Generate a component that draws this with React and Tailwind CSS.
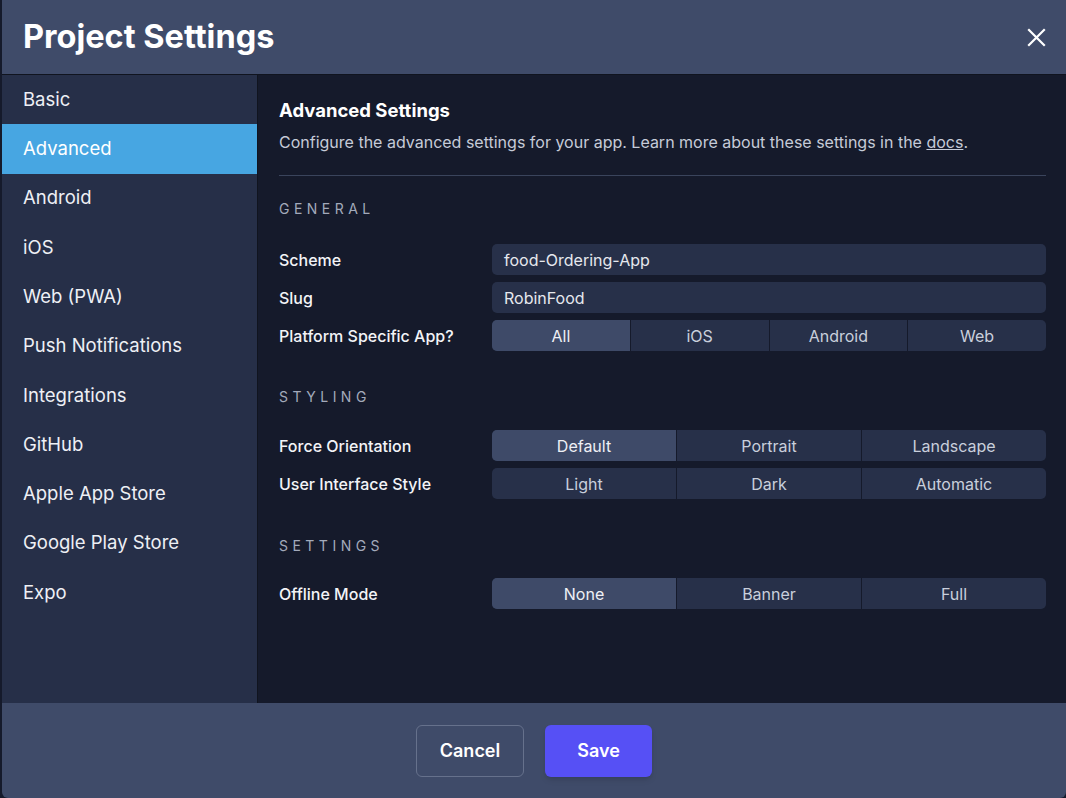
import React from "react";

const navItems = [
  "Basic",
  "Advanced",
  "Android",
  "iOS",
  "Web (PWA)",
  "Push Notifications",
  "Integrations",
  "GitHub",
  "Apple App Store",
  "Google Play Store",
  "Expo",
];

function Segmented({ options, active }) {
  return (
    <div className="flex h-[31px] overflow-hidden rounded-[5px] bg-[#273049]">
      {options.map((o, i) => (
        <div
          key={o}
          className={
            "flex flex-1 items-center justify-center text-[16px] " +
            (i > 0 ? "border-l border-[#151a2b] " : "") +
            (o === active ? "bg-[#3e4a68] text-[#eef0f5]" : "text-[#c9cfdc]")
          }
        >
          {o}
        </div>
      ))}
    </div>
  );
}

function Input({ value }) {
  return (
    <div className="flex h-[31px] items-center rounded-[5px] bg-[#273049] px-[12px] text-[16px] text-[#e6e8ee]">
      {value}
    </div>
  );
}

function Row({ label, children }) {
  return (
    <div className="flex items-center">
      <div className="w-[213px] shrink-0 text-[16px] font-medium text-[#f3f4f7]">{label}</div>
      <div className="flex-1">{children}</div>
    </div>
  );
}

function SectionTitle({ children }) {
  return (
    <div className="text-[14px] leading-[20px] tracking-[0.32em] text-[#a3aabb]">{children}</div>
  );
}

export default function App() {
  return (
    <div
      className="h-[798px] w-[1066px] overflow-hidden bg-[#151a2b] pl-[2px]"
      style={{ fontFamily: "Inter, 'Noto Sans', sans-serif" }}
    >
      <div className="flex h-[798px] w-[1064px] flex-col overflow-hidden rounded-b-[6px] bg-[#3f4b69]">
        {/* Header */}
        <div className="flex h-[74px] shrink-0 items-center justify-between pl-[21px] pr-[20px]">
          <div className="text-[32.5px] font-bold leading-none text-white">Project Settings</div>
          <svg width="19" height="19" viewBox="0 0 19 19">
            <path d="M2 2 L17 17 M17 2 L2 17" stroke="white" strokeWidth="2.2" strokeLinecap="square" />
          </svg>
        </div>

        {/* Body */}
        <div className="flex flex-1 border-t border-[#10141f]">
          <div className="w-[256px] shrink-0 border-r border-[#10141f] bg-[#262f48]">
            {navItems.map((n) => (
              <div
                key={n}
                className={
                  "flex h-[49.3px] items-center pl-[21px] text-[18.5px] text-[#eef0f5] " +
                  (n === "Advanced" ? "bg-[#47a6e2] text-white" : "")
                }
              >
                {n}
              </div>
            ))}
          </div>
          <div className="flex-1 bg-[#151a2b] pl-[21px] pr-[20px] pt-[21px]">
            <div className="text-[18.5px] font-bold leading-[28px] text-white">Advanced Settings</div>
            <div className="mt-[6px] text-[16px] leading-[24px] text-[#c6cbd8]">
              Configure the advanced settings for your app. Learn more about these settings in the{" "}
              <span className="underline">docs</span>.
            </div>
            <div className="mt-[21px] h-px bg-[#3a445c]" />

            <div className="mt-[23px]">
              <SectionTitle>GENERAL</SectionTitle>
            </div>
            <div className="mt-[25px] flex flex-col gap-[7px]">
              <Row label="Scheme">
                <Input value="food-Ordering-App" />
              </Row>
              <Row label="Slug">
                <Input value="RobinFood" />
              </Row>
              <Row label="Platform Specific App?">
                <Segmented options={["All", "iOS", "Android", "Web"]} active="All" />
              </Row>
            </div>

            <div className="mt-[36px]">
              <SectionTitle>STYLING</SectionTitle>
            </div>
            <div className="mt-[23px] flex flex-col gap-[7px]">
              <Row label="Force Orientation">
                <Segmented options={["Default", "Portrait", "Landscape"]} active="Default" />
              </Row>
              <Row label="User Interface Style">
                <Segmented options={["Light", "Dark", "Automatic"]} active="" />
              </Row>
            </div>

            <div className="mt-[37px]">
              <SectionTitle>SETTINGS</SectionTitle>
            </div>
            <div className="mt-[22px] flex flex-col gap-[7px]">
              <Row label="Offline Mode">
                <Segmented options={["None", "Banner", "Full"]} active="None" />
              </Row>
            </div>
          </div>
        </div>

        {/* Footer */}
        <div className="flex h-[95px] shrink-0 items-center justify-center gap-[21px]">
          <button className="h-[52px] w-[108px] rounded-[6px] border border-[#66718c] text-[18px] font-semibold text-white">
            Cancel
          </button>
          <button className="h-[52px] w-[107px] rounded-[6px] bg-[#5650f5] text-[18px] font-semibold text-white shadow-md">
            Save
          </button>
        </div>
      </div>
    </div>
  );
}
